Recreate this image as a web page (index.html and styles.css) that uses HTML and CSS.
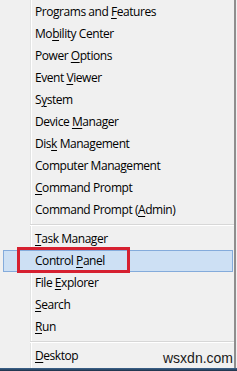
FILE: index.html
```html
<!doctype html>
<html lang="en">
<head>
	<meta charset="UTF-8">
	<title>Quick Link menu</title>
	<link rel="stylesheet" href="styles.css">
</head>
<body>
	<div class="screen">
		<div class="menu">
			<div class="item">Programs and <u>F</u>eatures</div>
			<div class="item">Mo<u>b</u>ility Center</div>
			<div class="item">Power <u>O</u>ptions</div>
			<div class="item">Event <u>V</u>iewer</div>
			<div class="item">S<u>y</u>stem</div>
			<div class="item">Device <u>M</u>anager</div>
			<div class="item">Dis<u>k</u> Management</div>
			<div class="item">Computer Mana<u>g</u>ement</div>
			<div class="item"><u>C</u>ommand Prompt</div>
			<div class="item">Command Prompt (<u>A</u>dmin)</div>
			<div class="sep"></div>
			<div class="item"><u>T</u>ask Manager</div>
			<div class="item active"><span class="mark">Control <u>P</u>anel</span></div>
			<div class="item">File <u>E</u>xplorer</div>
			<div class="item"><u>S</u>earch</div>
			<div class="item"><u>R</u>un</div>
			<div class="sep"></div>
			<div class="item"><u>D</u>esktop</div>
			<div class="wm">wsxdn.com</div>
		</div>
		<div class="edge"></div>
	</div>
	<div class="taskbar"></div>
</body>
</html>
```

FILE: styles.css
```css
body,html{
	width: 100%;
	height: 100%;
}
body{
	margin: 0;
	background: #f0f0f0;
	overflow: hidden;
}
*{
	font-family: "Open Sans", "Noto Sans", sans-serif;
}
.screen{
	display: flex;
	height: 368px;
}
.menu{
	width: 234px;
	padding-top: 1px;
	box-sizing: border-box;
	position: relative;
	background: linear-gradient(to right, #f0f0f0 30px, #e2e3e3 30px, #e2e3e3 31px, #ffffff 31px, #ffffff 32px, #f0f0f0 32px);
}
.edge{
	width: 2px;
	background: #8e8e8e;
}
.item{
	height: 22px;
	line-height: 22px;
	padding-left: 35px;
	font-size: 12px;
	color: #000;
	letter-spacing: -0.45px;
	box-sizing: border-box;
}
.item u{
	text-decoration-thickness: 1px;
	text-underline-offset: 2px;
}
.sep{
	height: 7px;
	margin-left: 30px;
	padding-top: 3px;
	box-sizing: border-box;
}
.sep::before{
	content: "";
	display: block;
	height: 1px;
	background: #d7d7d7;
	border-bottom: 1px solid #fff;
}
.active{
	margin: 0 1px 0 3px;
	padding-left: 31px;
	line-height: 20px;
	background: #cde0f4;
	border: 1px solid #84abdb;
}
.mark{
	position: relative;
}
.mark::after{
	content: "";
	position: absolute;
	left: -18px;
	top: -5px;
	width: 107px;
	height: 20px;
	border: 3px solid #d62030;
}
.wm{
	position: absolute;
	left: 163px;
	top: 350px;
	font-family: "Liberation Sans", Arial, sans-serif;
	font-size: 14px;
	color: #1a1a1a;
}
.taskbar{
	height: 3px;
	background: linear-gradient(#3d6690, #1d2f45);
}
```
